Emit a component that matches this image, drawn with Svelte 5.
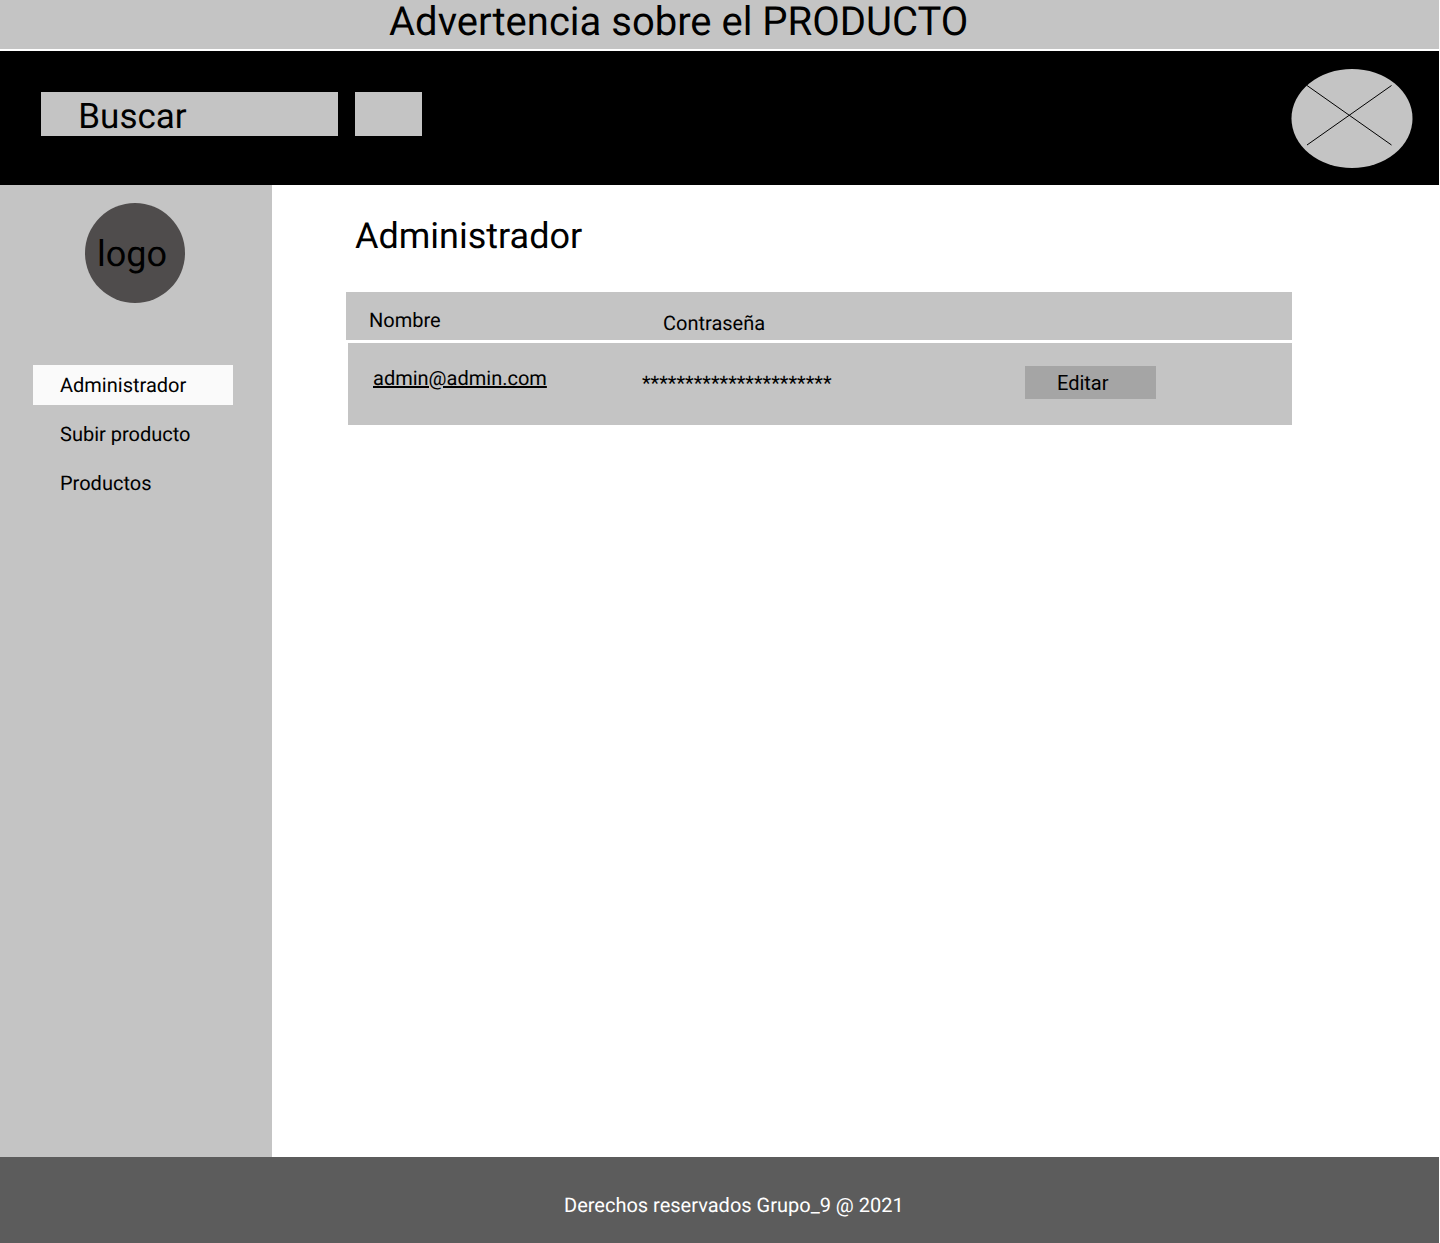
<script>
  let nav = [
    { label: "Administrador", active: true },
    { label: "Subir producto", active: false },
    { label: "Productos", active: false },
  ]
</script>

<div class="page">
  <div class="banner">Advertencia sobre el PRODUCTO</div>

  <header class="topbar">
    <div class="search">Buscar</div>
    <button class="search-btn" aria-label="Buscar"></button>
    <svg class="avatar" width="122" height="100" viewBox="0 0 122 100">
      <ellipse cx="61" cy="49.500" rx="60.500" ry="49.500" fill="#c4c4c4" />
      <path d="M16 16.500 L100.500 76 M16 76 L100.500 16.500" stroke="#000" fill="none" />
    </svg>
  </header>

  <div class="middle">
    <aside class="sidebar">
      <div class="logo">logo</div>
      <nav>
        {#each nav as item}
          <div class="nav-item" class:active={item.active}>{item.label}</div>
        {/each}
      </nav>
    </aside>

    <main>
      <h1>Administrador</h1>
      <div class="table-head">
        <span class="th-name">Nombre</span>
        <span class="th-pass">Contraseña</span>
      </div>
      <div class="table-row">
        <span class="email">admin@admin.com</span>
        <span class="stars">**********************</span>
        <button class="edit">Editar</button>
      </div>
    </main>
  </div>

  <footer>Derechos reservados Grupo_9 @ 2021</footer>
</div>

<style>
  :global(body) {
    background: #fff;
  }
  .page {
    width: 1439px;
    height: 1243px;
    display: flex;
    flex-direction: column;
    font-family: Roboto, sans-serif;
    color: #000;
    text-rendering: geometricPrecision;
  }
  .banner {
    height: 49px;
    margin-bottom: 2px;
    padding-left: 389px;
    background: #c4c4c4;
    font-size: 40px;
    line-height: 43px;
  }
  .topbar {
    height: 134px;
    background: #000;
    display: flex;
    align-items: flex-start;
    padding-left: 41.300px;
    padding-right: 26px;
  }
  .search {
    width: 259.400px;
    height: 44px;
    margin-top: 41px;
    padding-left: 37px;
    background: #c4c4c4;
    font-size: 35px;
    line-height: 49px;
  }
  .search-btn {
    width: 66.400px;
    height: 44px;
    margin-top: 41px;
    margin-left: 17.600px;
    padding: 0;
    border: 0;
    background: #c4c4c4;
  }
  .avatar {
    margin-top: 18px;
    margin-left: auto;
  }
  .middle {
    flex: 1;
    display: flex;
  }
  .sidebar {
    width: 272px;
    background: #c4c4c4;
    padding-top: 18px;
  }
  .logo {
    width: 100px;
    height: 100px;
    margin-left: 85px;
    border-radius: 50%;
    background: #4f4c4c;
    font-size: 36px;
    line-height: 102px;
    padding-left: 12px;
    box-sizing: border-box;
  }
  nav {
    margin-top: 62px;
    margin-left: 33px;
    display: flex;
    flex-direction: column;
    gap: 9px;
  }
  .nav-item {
    width: 200px;
    height: 40px;
    padding-left: 27px;
    box-sizing: border-box;
    font-size: 20px;
    line-height: 40px;
  }
  .nav-item.active {
    background: #fafafa;
  }
  main {
    flex: 1;
    padding-left: 74px;
  }
  h1 {
    margin: 30px 0 35px 9px;
    font-size: 36px;
    font-weight: 400;
    line-height: 42px;
  }
  .table-head {
    width: 946px;
    height: 48px;
    background: #c4c4c4;
    display: flex;
    font-size: 20px;
    line-height: 23px;
  }
  .th-name {
    margin: 17px 0 0 23px;
    width: 294px;
  }
  .th-pass {
    margin-top: 20px;
  }
  .table-row {
    width: 944px;
    height: 82px;
    margin: 3px 0 0 2px;
    background: #c4c4c4;
    display: flex;
    align-items: flex-start;
    font-size: 20px;
    line-height: 23px;
  }
  .email {
    width: 269px;
    margin: 24px 0 0 25px;
    text-decoration: underline;
  }
  .stars {
    width: 383px;
    margin-top: 29px;
  }
  .edit {
    width: 131px;
    height: 33px;
    margin-top: 23px;
    padding: 0 0 0 32px;
    border: 0;
    background: #a5a5a5;
    font: inherit;
    line-height: 35px;
    text-align: left;
    color: #000;
  }
  footer {
    height: 86px;
    background: #5c5c5c;
    color: #fff;
    font-size: 20px;
    line-height: 96px;
    padding-left: 564px;
    box-sizing: border-box;
  }
</style>
